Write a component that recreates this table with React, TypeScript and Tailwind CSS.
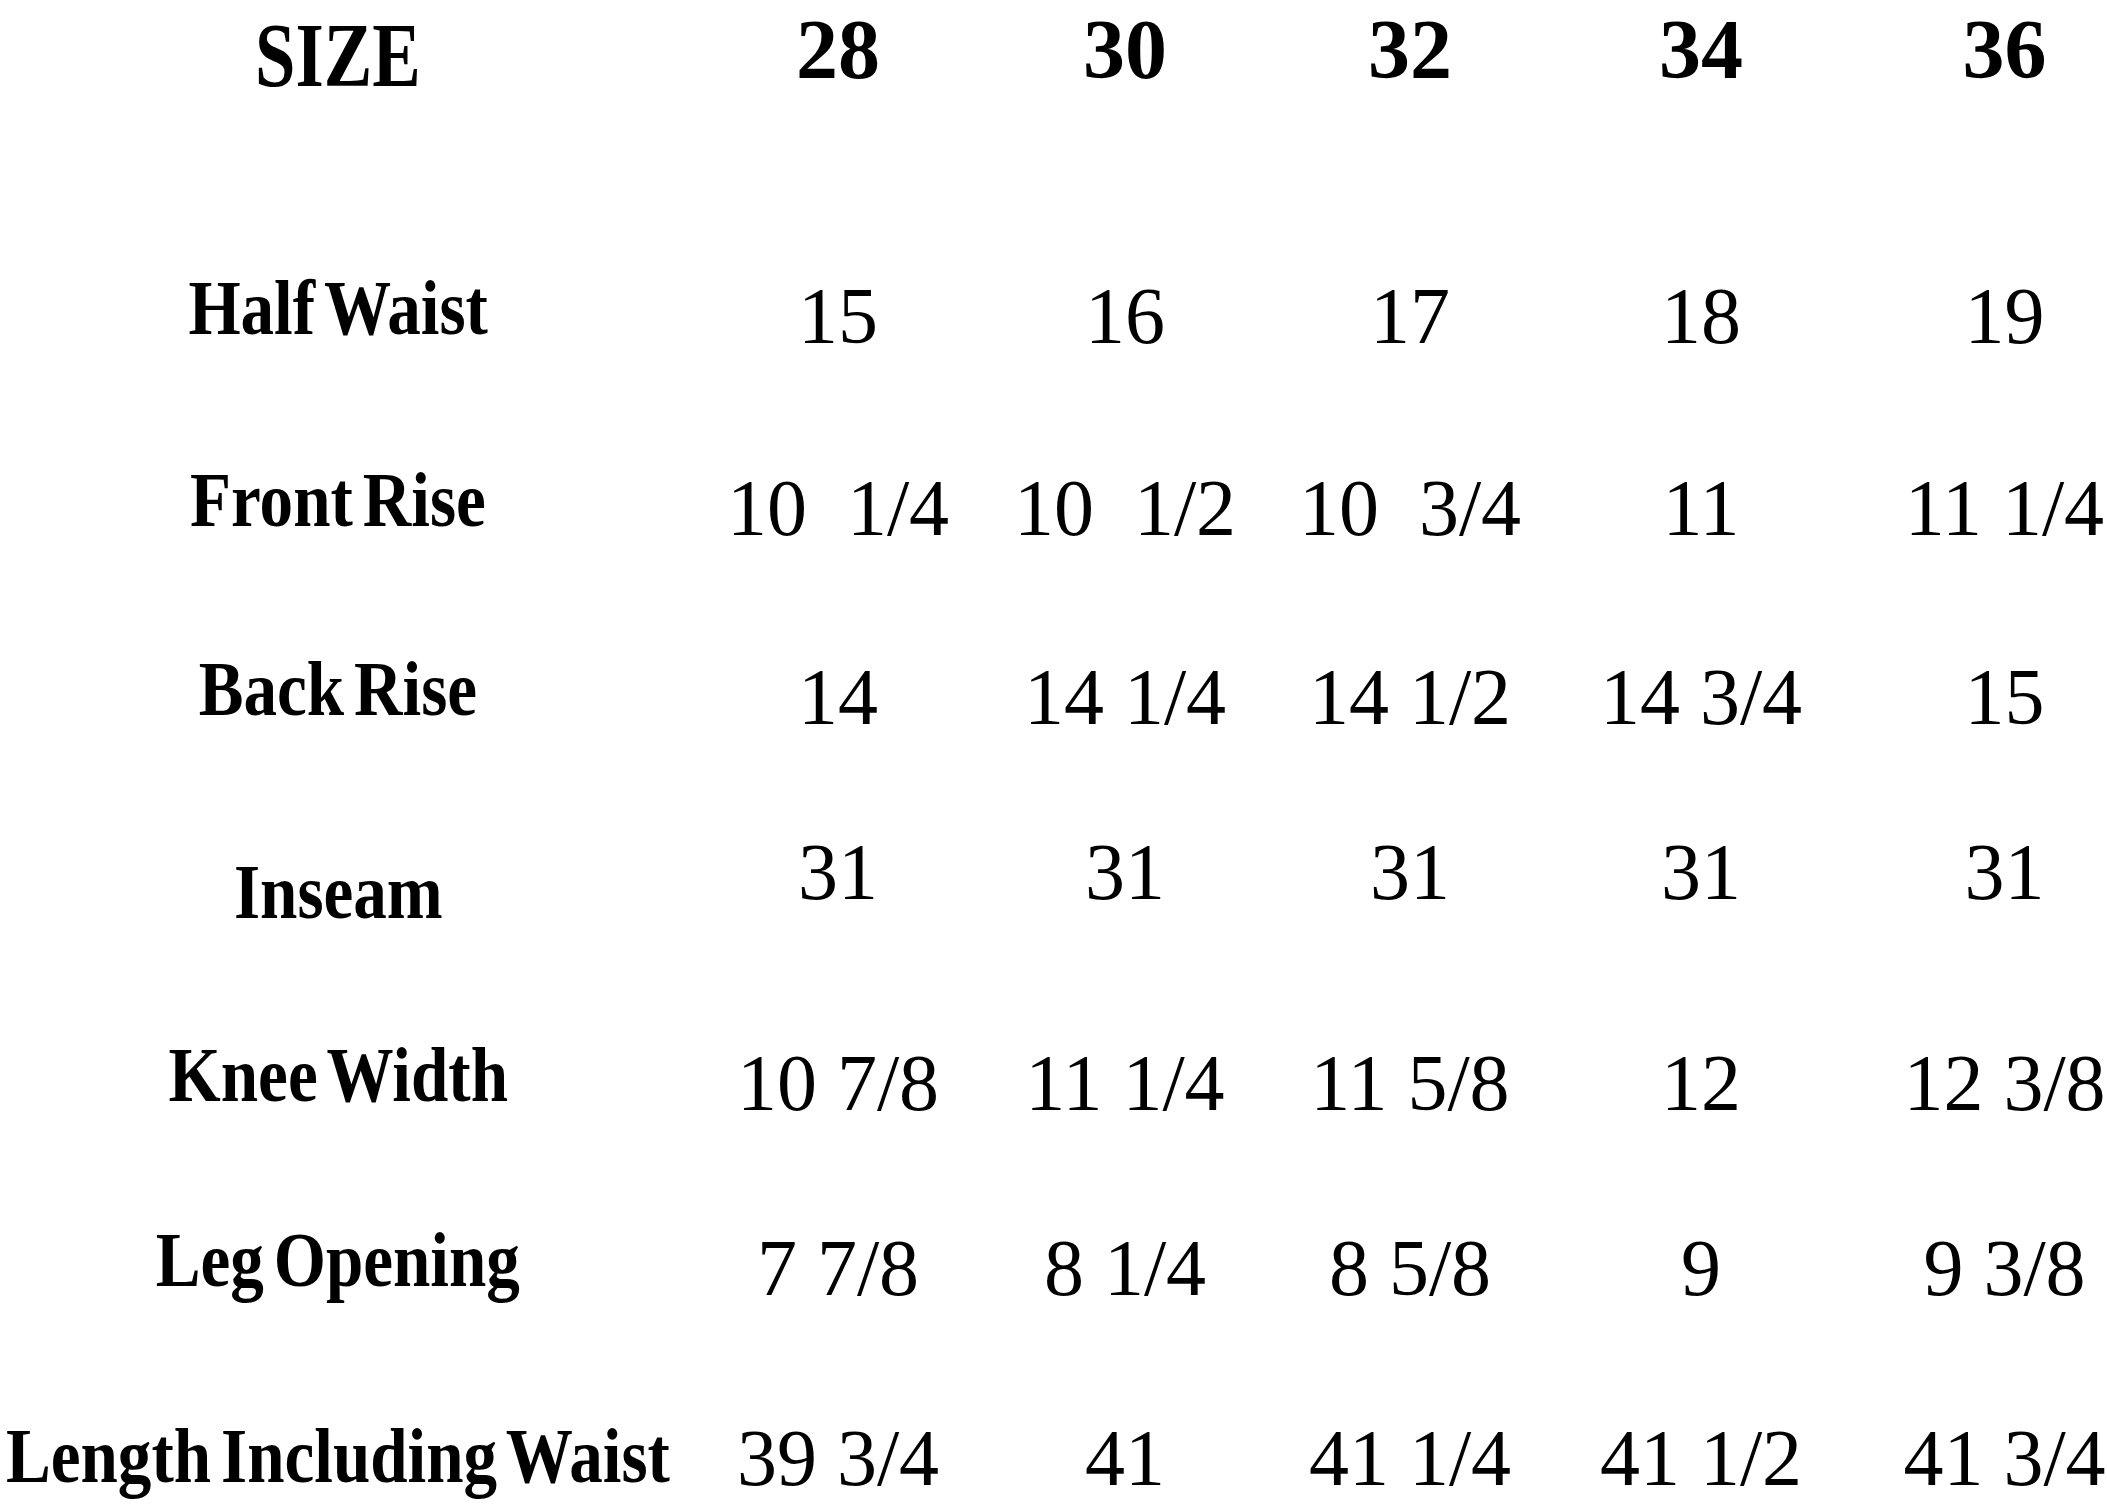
import React from "react";

const rows: { label: string; values: string[]; mt: string; valueCls?: string }[] = [
  { label: "Half Waist", values: ["15", "16", "17", "18", "19"], mt: "mt-[158px]" },
  { label: "Front Rise", values: ["10\u00a0\u00a01/4", "10\u00a0\u00a01/2", "10\u00a0\u00a03/4", "11", "11 1/4"], mt: "mt-[92px]" },
  { label: "Back Rise", values: ["14", "14 1/4", "14 1/2", "14 3/4", "15"], mt: "mt-[89px]" },
  { label: "Inseam", values: ["31", "31", "31", "31", "31"], mt: "mt-[103px]", valueCls: "mb-[40px]" },
  { label: "Knee Width", values: ["10 7/8", "11 1/4", "11 5/8", "12", "12 3/8"], mt: "mt-[83px]" },
  { label: "Leg Opening", values: ["7 7/8", "8 1/4", "8 5/8", "9", "9 3/8"], mt: "mt-[85px]" },
  { label: "Length Including Waist", values: ["39 3/4", "41", "41 1/4", "41 1/2", "41 3/4"], mt: "mt-[96px]", valueCls: "mt-[4px]" },
];

const colW = ["w-[324px]", "w-[250px]", "w-[320px]", "w-[262px]", "flex-1 pl-[70px]"];

export default function App() {
  return (
    <div
      className="w-[2107px] h-[1508px] bg-white text-black overflow-hidden"
      style={{ fontFamily: '"Liberation Serif", "Times New Roman", serif' }}
    >
      <div className="flex h-[100px] items-center">
        <div className="w-[676px] flex justify-center items-center h-full pt-[10px]">
          <span className="inline-block whitespace-nowrap font-bold text-[92px] leading-none scale-x-[0.79]">
            SIZE
          </span>
        </div>
        {["28", "30", "32", "34", "36"].map((s, i) => (
          <div key={s} className={`${colW[i]} flex justify-center items-center h-full`}>
            <span className="font-bold text-[84px] leading-none whitespace-nowrap">{s}</span>
          </div>
        ))}
      </div>
      {rows.map((r) => (
        <div key={r.label} className={`flex h-[100px] items-center ${r.mt}`}>
          <div className="w-[676px] flex justify-center items-center h-full">
            <span className="inline-block whitespace-nowrap font-bold text-[78px] leading-none scale-x-[0.86] [word-spacing:-0.1em]">
              {r.label}
            </span>
          </div>
          {r.values.map((v, i) => (
            <div key={i} className={`${colW[i]} flex justify-center items-center h-full`}>
              <span className={`text-[80px] leading-none whitespace-nowrap ${r.valueCls ?? "mt-[16px]"}`}>{v}</span>
            </div>
          ))}
        </div>
      ))}
    </div>
  );
}
